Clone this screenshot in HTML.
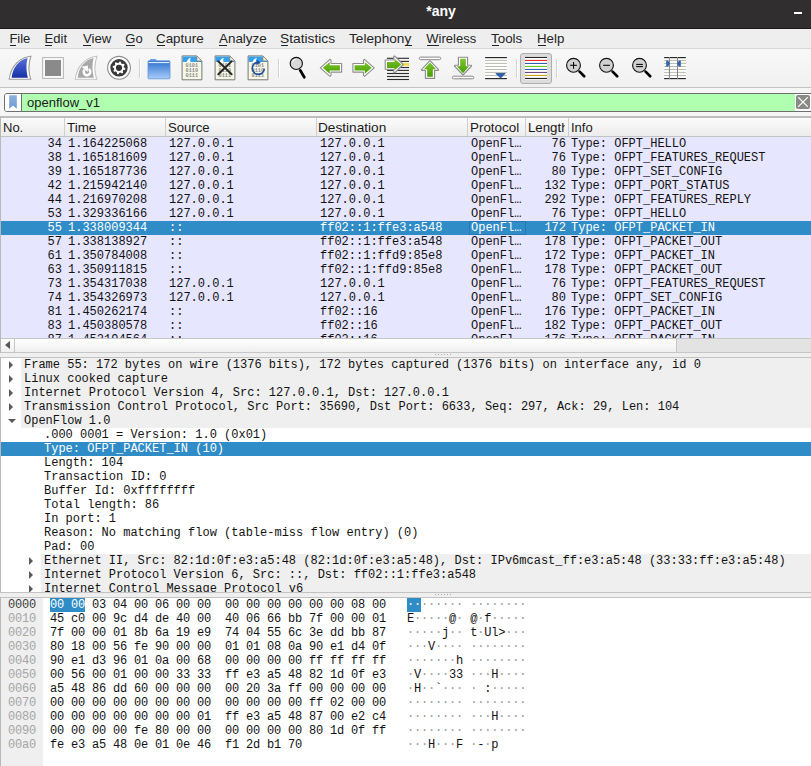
<!DOCTYPE html><html><head><meta charset="utf-8"><style>
*{margin:0;padding:0;box-sizing:border-box}
html,body{width:811px;height:766px;overflow:hidden;background:#efefef;position:relative}
body{font-family:"Liberation Sans",sans-serif;color:#1f1f1f}
.a{position:absolute}
.mono{font-family:"Liberation Mono",monospace;font-size:12px;line-height:14px;white-space:pre}
#title{left:0;top:0;width:811px;height:28px;background:#302e2f}
#titleline{left:0;top:28px;width:811px;height:1px;background:#1a1a1a}
#ttext{left:0;top:3px;width:882px;text-align:center;color:#fff;font-weight:bold;font-size:14px;line-height:16px}
#menubar{left:0;top:29px;width:811px;height:19px;background:#eeeeee}
#menuline{left:0;top:48px;width:811px;height:1px;background:#d8d8d8}
.mi{position:absolute;top:31px;font-size:13px;line-height:15px;color:#232323;white-space:pre}
.ul{position:absolute;top:45px;height:1px;background:#232323}
#toolbar{left:0;top:49px;width:811px;height:38px;background:linear-gradient(#f8f8f8,#f1f1f1)}
#tbline{left:0;top:87px;width:811px;height:1px;background:#c4c4c4}
#fbar{left:0;top:88px;width:811px;height:28px;background:#f6f6f6}
#fedit{left:4px;top:93px;width:820px;height:19px;border:1px solid #6f6f6f;border-radius:3px;background:#b0ffb0;overflow:hidden}
#fbm{left:0;top:0;width:17px;height:17px;background:#fff;border-right:1px solid #6f6f6f}
#ftext{left:22px;top:1px;font-size:13px;line-height:15px;color:#1a1a1a}
#plist{left:0;top:116px;width:811px;height:237px;background:#e7e6ff}
#plborder{left:0;top:116px;width:811px;height:2px;background:#bdbdbd}
#plleft{left:0;top:116px;width:1px;height:237px;background:#b8b8b8}
#phdr{left:1px;top:118px;width:810px;height:18px;background:linear-gradient(#fbfbfb,#ececec)}
#phline{left:1px;top:136px;width:810px;height:1px;background:#c3c3c3}
.hd{position:absolute;top:120px;overflow:hidden;font-size:13px;line-height:15px;color:#1a1a1a;white-space:pre}
.hsep{position:absolute;top:118px;width:1px;height:18px;background:#cfcfcf}
#rows{left:1px;top:137px;width:810px;height:201px;overflow:hidden}
.pr{position:absolute;left:0;width:810px;height:14px;color:#121212}
.pr span{position:absolute;top:0}
.pr.sel{background:#308cc6;color:#fff}
.c0{right:749px;text-align:right}
.c1{left:67px}.c2{left:168px}.c3{left:319px}.c4{left:470px}.c5{right:245px;text-align:right}.c6{left:570px}
#hscroll{left:1px;top:338px;width:810px;height:15px;background:#e3e3e3;border-top:1px solid #c6c6c6;border-bottom:1px solid #c6c6c6}
#hsl{left:13px;top:0;width:663px;height:13px;background:linear-gradient(#ffffff,#efefef);border-left:1px solid #c6c6c6;border-right:1px solid #c6c6c6}
#hbtn{left:0;top:0;width:13px;height:13px;background:linear-gradient(#ffffff,#efefef)}
#det{left:0;top:357px;width:811px;height:236px;background:#fff;border-top:1px solid #c3c3c3;border-bottom:1px solid #c3c3c3;border-left:1px solid #b8b8b8;overflow:hidden}
.dr{position:absolute;height:14px;left:0;width:811px}
.dr .t{position:absolute;top:0}
.gray{background:#efefef}
.dsel{background:#308cc6;color:#fff}
#bytes{left:0;top:597px;width:811px;height:169px;background:#fff;border-top:1px solid #c3c3c3;border-left:1px solid #b8b8b8}
#offcol{left:0;top:0;width:42px;height:169px;background:#efefef}
.off{position:absolute;left:7px;color:#a5a5a5;letter-spacing:-0.2px}
.hx{position:absolute;left:49px;color:#121212;letter-spacing:-0.2px}
.asc i{font-style:normal;color:#9a9a9a}
.asc{position:absolute;left:406px;color:#121212;letter-spacing:-0.2px}
</style></head><body>
<div class="a" id="title"></div><div class="a" id="titleline"></div><div class="a" id="ttext">*any</div>
<div class="a" style="left:794px;top:12px;width:8px;height:2px;background:#fff"></div>
<div class="a" id="menubar"></div><div class="a" id="menuline"></div>
<div class="mi" style="left:9.4px;transform:scaleX(1);transform-origin:0 0">File</div>
<div class="mi" style="left:44.6px;transform:scaleX(1);transform-origin:0 0">Edit</div>
<div class="mi" style="left:83.0px;transform:scaleX(1.01);transform-origin:0 0">View</div>
<div class="mi" style="left:125.3px;transform:scaleX(1);transform-origin:0 0">Go</div>
<div class="mi" style="left:156.0px;transform:scaleX(1.03);transform-origin:0 0">Capture</div>
<div class="mi" style="left:218.5px;transform:scaleX(1.03);transform-origin:0 0">Analyze</div>
<div class="mi" style="left:280.4px;transform:scaleX(1.06);transform-origin:0 0">Statistics</div>
<div class="mi" style="left:349.4px;transform:scaleX(1.05);transform-origin:0 0">Telephony</div>
<div class="mi" style="left:426.3px;transform:scaleX(1);transform-origin:0 0">Wireless</div>
<div class="mi" style="left:491.4px;transform:scaleX(1.03);transform-origin:0 0">Tools</div>
<div class="mi" style="left:537.3px;transform:scaleX(1.02);transform-origin:0 0">Help</div>
<div class="ul" style="left:10px;width:6px"></div>
<div class="ul" style="left:45px;width:7px"></div>
<div class="ul" style="left:83px;width:8px"></div>
<div class="ul" style="left:126px;width:9px"></div>
<div class="ul" style="left:157px;width:8px"></div>
<div class="ul" style="left:219px;width:8px"></div>
<div class="ul" style="left:281px;width:7px"></div>
<div class="ul" style="left:405px;width:7px"></div>
<div class="ul" style="left:427px;width:12px"></div>
<div class="ul" style="left:492px;width:7px"></div>
<div class="ul" style="left:538px;width:8px"></div>
<div class="a" id="toolbar"></div><div class="a" id="tbline"></div>
<svg width="0" height="0" style="position:absolute"><defs>
<linearGradient id="gblue" x1="0" y1="0" x2="0" y2="1"><stop offset="0" stop-color="#5670dc"/><stop offset="1" stop-color="#1730a6"/></linearGradient>
<linearGradient id="ggreen" x1="0" y1="0" x2="0" y2="1"><stop offset="0" stop-color="#7ac52c"/><stop offset="1" stop-color="#4a9e05"/></linearGradient>
<linearGradient id="gfold" x1="0" y1="0" x2="0" y2="1"><stop offset="0" stop-color="#3a78d0"/><stop offset="0.15" stop-color="#3f7fd4"/><stop offset="1" stop-color="#a8ccfa"/></linearGradient>
</defs></svg>
<svg class="a" style="left:6px;top:52px" width="30" height="30" viewBox="0 0 30 30"><path d="M3.2 27.3 L24.8 27.3 C23 22 21.6 14 24.9 4.2 C15 5 5 13 3.2 27.3 Z" fill="#fff" stroke="#9c9c9c" stroke-width="1.1"/><path d="M5.6 25.8 L21.9 25.8 C20.3 20 19.8 12 21.7 6.1 C13 8 7 15 5.6 25.8 Z" fill="url(#gblue)"/></svg>
<svg class="a" style="left:39px;top:52px" width="30" height="30" viewBox="0 0 30 30"><rect x="3.6" y="5.6" width="20.8" height="20.8" fill="#fafafa" stroke="#b5b5b5" stroke-width="1"/><rect x="6" y="8" width="16" height="16" fill="#8a8a8a"/></svg>
<svg class="a" style="left:72px;top:52px" width="30" height="30" viewBox="0 0 30 30"><path d="M3.2 27.3 L24.8 27.3 C23 22 21.6 14 24.9 4.2 C15 5 5 13 3.2 27.3 Z" fill="#fff" stroke="#c4c4c4" stroke-width="1.1"/><path d="M5.6 25.8 L21.9 25.8 C20.3 20 19.8 12 21.7 6.1 C13 8 7 15 5.6 25.8 Z" fill="#a8a8a8"/><path d="M12.67 17.57 A3.3 3.3 0 1 0 16.65 17.04" fill="none" stroke="#fff" stroke-width="2.5"/><polygon points="9.6,14.7 16,13.5 15.8,20" fill="#fff"/></svg>
<svg class="a" style="left:104px;top:52px" width="30" height="30" viewBox="0 0 30 30"><circle cx="15" cy="15.8" r="11.4" fill="#fff" stroke="#8c8c8c" stroke-width="1.1"/><circle cx="15" cy="15.8" r="8.7" fill="#3a3a3a"/><polygon points="15.63,9.43 16.86,9.68 17.31,11.48 18.11,12.01 19.95,11.74 20.64,12.78 19.69,14.38 19.88,15.32 21.37,16.43 21.12,17.66 19.32,18.11 18.79,18.91 19.06,20.75 18.02,21.44 16.42,20.49 15.48,20.68 14.37,22.17 13.14,21.92 12.69,20.12 11.89,19.59 10.05,19.86 9.36,18.82 10.31,17.22 10.12,16.28 8.63,15.17 8.88,13.94 10.68,13.49 11.21,12.69 10.94,10.85 11.98,10.16 13.58,11.11 14.52,10.92" fill="#fff"/><circle cx="15" cy="15.8" r="3.1" fill="#333"/></svg>
<div class="a" style="left:139px;top:59px;width:1px;height:19px;background:#d2d2d2"></div><div class="a" style="left:140px;top:59px;width:1px;height:19px;background:#fff"></div>
<svg class="a" style="left:143px;top:52px" width="30" height="30" viewBox="0 0 30 30"><path d="M6.6 9 L7.4 6.9 L12.9 6.9 L13.9 9 Z" fill="#6c9fe6"/><rect x="5" y="8.8" width="22" height="18" rx="0.9" fill="url(#gfold)" stroke="#5e95e2" stroke-width="0.8"/><rect x="5.6" y="10.1" width="20.8" height="1" fill="#eef3fb"/></svg>
<svg class="a" style="left:177px;top:52px" width="30" height="30" viewBox="0 0 30 30"><path d="M5.1 3.9 L19.8 3.9 L24.9 9 L24.9 27.8 L5.1 27.8 Z" fill="#f7f7e6" stroke="#777" stroke-width="1"/><path d="M5.6 4.4 L19.6 4.4 L24.4 9.2 L24.4 9.9 L5.6 9.9 Z" fill="#37a0ea"/><path d="M9.6 9.9 C10.4 7.6 11.8 6.2 14 5.7 C13 7.2 13 8.6 13.6 9.9 Z" fill="#fff"/><path d="M19.8 4.2 L19.8 9 L24.6 9" fill="#eeeedd" stroke="#777" stroke-width="0.8"/><g fill="#8a8a8a" font-family="Liberation Mono" font-size="5.2" font-weight="bold"><text x="8.6" y="15.2">0101</text><text x="8.6" y="20">0110</text><text x="8.6" y="24.8">0111</text></g></svg>
<svg class="a" style="left:210px;top:52px" width="30" height="30" viewBox="0 0 30 30"><path d="M5.1 3.9 L19.8 3.9 L24.9 9 L24.9 27.8 L5.1 27.8 Z" fill="#f7f7e6" stroke="#777" stroke-width="1"/><path d="M5.6 4.4 L19.6 4.4 L24.4 9.2 L24.4 9.9 L5.6 9.9 Z" fill="#37a0ea"/><path d="M9.6 9.9 C10.4 7.6 11.8 6.2 14 5.7 C13 7.2 13 8.6 13.6 9.9 Z" fill="#fff"/><path d="M19.8 4.2 L19.8 9 L24.6 9" fill="#eeeedd" stroke="#777" stroke-width="0.8"/><g fill="#8a8a8a" font-family="Liberation Mono" font-size="5.2" font-weight="bold"><text x="8.6" y="15.2">0101</text><text x="8.6" y="20">0110</text><text x="8.6" y="24.8">0111</text></g><g stroke="#262626" stroke-width="2" stroke-linecap="round"><line x1="8.3" y1="9.4" x2="21.6" y2="22.3"/><line x1="21.6" y1="9.4" x2="8.3" y2="22.3"/></g></svg>
<svg class="a" style="left:243px;top:52px" width="30" height="30" viewBox="0 0 30 30"><path d="M5.1 3.9 L19.8 3.9 L24.9 9 L24.9 27.8 L5.1 27.8 Z" fill="#f7f7e6" stroke="#777" stroke-width="1"/><path d="M5.6 4.4 L19.6 4.4 L24.4 9.2 L24.4 9.9 L5.6 9.9 Z" fill="#37a0ea"/><path d="M9.6 9.9 C10.4 7.6 11.8 6.2 14 5.7 C13 7.2 13 8.6 13.6 9.9 Z" fill="#fff"/><path d="M19.8 4.2 L19.8 9 L24.6 9" fill="#eeeedd" stroke="#777" stroke-width="0.8"/><g fill="#8a8a8a" font-family="Liberation Mono" font-size="5.2" font-weight="bold"><text x="8.6" y="15.2">0101</text><text x="8.6" y="20">0110</text><text x="8.6" y="24.8">0111</text></g><path d="M21.3 16.6 A6 6 0 1 1 14.2 10.4" fill="none" stroke="#1e4f9c" stroke-width="1.7"/><polygon points="13.6,7.6 17.6,10.4 13.6,13" fill="#1e4f9c"/></svg>
<div class="a" style="left:278px;top:59px;width:1px;height:19px;background:#d2d2d2"></div><div class="a" style="left:279px;top:59px;width:1px;height:19px;background:#fff"></div>
<svg class="a" style="left:282px;top:52px" width="30" height="30" viewBox="0 0 30 30"><line x1="18.2" y1="18.3" x2="22.3" y2="25.3" stroke="#000" stroke-width="2.7" stroke-linecap="round"/><circle cx="14.3" cy="11.4" r="6.1" fill="#d8d8d8" stroke="#111" stroke-width="1.15"/><path d="M10.6 9.8 A4 4 0 0 1 13.8 7.3" fill="none" stroke="#fff" stroke-width="0.9"/></svg>
<svg class="a" style="left:315px;top:52px" width="30" height="30" viewBox="0 0 30 30"><polygon points="5.30,15.80 15.00,7.30 16.00,8.20 16.00,11.50 26.60,11.50 26.60,20.10 16.00,20.10 16.00,23.40 15.00,24.30" fill="#fff" stroke="#8c8c8c" stroke-width="1.1" stroke-linejoin="round"/><polygon points="7.80,15.80 14.70,9.90 14.70,13.20 24.90,13.20 24.90,18.60 14.70,18.60 14.70,21.70" fill="url(#ggreen)"/></svg>
<svg class="a" style="left:348px;top:52px" width="30" height="30" viewBox="0 0 30 30"><polygon points="26.20,15.80 16.50,7.30 15.50,8.20 15.50,11.50 4.90,11.50 4.90,20.10 15.50,20.10 15.50,23.40 16.50,24.30" fill="#fff" stroke="#8c8c8c" stroke-width="1.1" stroke-linejoin="round"/><polygon points="23.70,15.80 16.80,9.90 16.80,13.20 6.60,13.20 6.60,18.60 16.80,18.60 16.80,21.70" fill="url(#ggreen)"/></svg>
<svg class="a" style="left:381px;top:52px" width="30" height="30" viewBox="0 0 30 30"><rect x="6" y="5.75" width="22" height="1.1" fill="#2b2b2b"/><rect x="6" y="8.85" width="22" height="1.1" fill="#2b2b2b"/><rect x="6" y="14.95" width="22" height="1.1" fill="#2b2b2b"/><rect x="6" y="17.85" width="22" height="1.1" fill="#2b2b2b"/><rect x="6" y="20.95" width="22" height="1.1" fill="#2b2b2b"/><rect x="6" y="23.95" width="22" height="1.1" fill="#2b2b2b"/><rect x="6" y="26.95" width="22" height="1.1" fill="#2b2b2b"/><rect x="6" y="11.9" width="22" height="1.1" fill="#2b2b2b"/><rect x="21.4" y="11.2" width="6.6" height="2.6" fill="#f6df3c"/><polygon points="4.2,8.0 12.8,8.0 12.8,4.3 13.6,3.9 22.2,12.5 13.6,21 12.8,20.6 12.8,17.3 4.2,17.3" fill="#fff" stroke="#8c8c8c" stroke-width="1.1" stroke-linejoin="round"/><polygon points="6.0,10.0 13.5,10.0 13.5,6.8 20.3,12.5 13.5,18.3 13.5,15.9 6.0,15.9" fill="url(#ggreen)"/></svg>
<svg class="a" style="left:414px;top:52px" width="30" height="30" viewBox="0 0 30 30"><rect x="5.3" y="5.1" width="21.4" height="2.6" rx="1.3" fill="#fff" stroke="#888" stroke-width="1"/><polygon points="16,8.6 24.6,17.6 24.2,18.4 20.6,18.4 20.6,26.4 11.4,26.4 11.4,18.4 7.8,18.4 7.4,17.6" fill="#fff" stroke="#8c8c8c" stroke-width="1.1" stroke-linejoin="round"/><polygon points="16,10.4 22.1,17.3 18.8,17.3 18.8,24.8 13.2,24.8 13.2,17.3 9.9,17.3" fill="url(#ggreen)"/></svg>
<svg class="a" style="left:447px;top:52px" width="30" height="30" viewBox="0 0 30 30"><rect x="5.3" y="24.2" width="21.4" height="2.6" rx="1.3" fill="#fff" stroke="#888" stroke-width="1"/><polygon points="16.00,23.00 24.60,14.00 24.20,13.20 20.60,13.20 20.60,5.20 11.40,5.20 11.40,13.20 7.80,13.20 7.40,14.00" fill="#fff" stroke="#8c8c8c" stroke-width="1.1" stroke-linejoin="round"/><polygon points="16.00,21.20 22.10,14.30 18.80,14.30 18.80,6.80 13.20,6.80 13.20,14.30 9.90,14.30" fill="url(#ggreen)"/></svg>
<svg class="a" style="left:480px;top:52px" width="30" height="30" viewBox="0 0 30 30"><rect x="4.8" y="4.6" width="22.4" height="23" fill="#fff"/><rect x="5.1" y="5" width="21.8" height="1.2" fill="#2a2a2a"/><rect x="5.1" y="26" width="21.8" height="1.2" fill="#2a2a2a"/><rect x="5.1" y="7.90" width="21.8" height="1" fill="#b9baae"/><rect x="5.1" y="10.90" width="21.8" height="1" fill="#b9baae"/><rect x="5.1" y="14.00" width="21.8" height="1" fill="#b9baae"/><rect x="5.1" y="17.00" width="21.8" height="1" fill="#b9baae"/><rect x="5.1" y="19.90" width="21.8" height="1" fill="#b9baae"/><rect x="5.1" y="23.00" width="21.8" height="1" fill="#b9baae"/><path d="M15.4 21.6 Q15.2 21 16 21 L25 21 Q25.8 21 25.6 21.6 L20.6 26.6 Z" fill="#2f63ad"/></svg>
<div class="a" style="left:516px;top:59px;width:1px;height:19px;background:#d2d2d2"></div><div class="a" style="left:517px;top:59px;width:1px;height:19px;background:#fff"></div>
<div class="a" style="left:556px;top:59px;width:1px;height:19px;background:#d2d2d2"></div><div class="a" style="left:557px;top:59px;width:1px;height:19px;background:#fff"></div>
<div class="a" style="left:520px;top:53px;width:32px;height:31px;border:1px solid #aeaeae;border-radius:3px;background:#dcdcdc"></div>
<svg class="a" style="left:524px;top:55px" width="24" height="26" viewBox="0 0 24 26"><rect x="1" y="1.6" width="22" height="23" fill="#fff"/><rect x="1" y="1.9" width="22" height="1.1" fill="#262626"/><rect x="1" y="4.9" width="22" height="1.1" fill="#e52b2b"/><rect x="1" y="7.9" width="22" height="1.1" fill="#2f63ad"/><rect x="1" y="10.9" width="22" height="1.1" fill="#5ac51c"/><rect x="1" y="13.9" width="22" height="1.1" fill="#2f63ad"/><rect x="1" y="16.9" width="22" height="1.1" fill="#6b4a86"/><rect x="1" y="19.9" width="22" height="1.1" fill="#c9a117"/><rect x="1" y="22.9" width="22" height="1.1" fill="#262626"/></svg>
<svg class="a" style="left:560px;top:52px" width="30" height="30" viewBox="0 0 30 30"><line x1="19.6" y1="19.6" x2="24.2" y2="24.3" stroke="#000" stroke-width="2.7" stroke-linecap="round"/><circle cx="13.5" cy="13.3" r="6.9" fill="#d0d0d0" stroke="#111" stroke-width="1.15"/><g stroke="#000" stroke-width="1.05"><line x1="10.2" y1="13.3" x2="16.9" y2="13.3"/><line x1="13.55" y1="10" x2="13.55" y2="16.7"/></g></svg>
<svg class="a" style="left:593px;top:52px" width="30" height="30" viewBox="0 0 30 30"><line x1="19.6" y1="19.6" x2="24.2" y2="24.3" stroke="#000" stroke-width="2.7" stroke-linecap="round"/><circle cx="13.5" cy="13.3" r="6.9" fill="#d0d0d0" stroke="#111" stroke-width="1.15"/><g stroke="#000" stroke-width="1.05"><line x1="10.2" y1="13.3" x2="16.9" y2="13.3"/></g></svg>
<svg class="a" style="left:626px;top:52px" width="30" height="30" viewBox="0 0 30 30"><line x1="19.6" y1="19.6" x2="24.2" y2="24.3" stroke="#000" stroke-width="2.7" stroke-linecap="round"/><circle cx="13.5" cy="13.3" r="6.9" fill="#d0d0d0" stroke="#111" stroke-width="1.15"/><g stroke="#000" stroke-width="1.05"><line x1="10.2" y1="12.4" x2="16.9" y2="12.4"/><line x1="10.2" y1="14.6" x2="16.9" y2="14.6"/></g></svg>
<svg class="a" style="left:659px;top:52px" width="30" height="30" viewBox="0 0 30 30"><rect x="4.8" y="4.6" width="22.4" height="23" fill="#fff"/><rect x="5.1" y="5" width="21.8" height="1.2" fill="#2a2a2a"/><rect x="5.1" y="26" width="21.8" height="1.2" fill="#2a2a2a"/><rect x="5.1" y="7.90" width="21.8" height="1" fill="#b9baae"/><rect x="5.1" y="10.90" width="21.8" height="1" fill="#b9baae"/><rect x="5.1" y="14.00" width="21.8" height="1" fill="#b9baae"/><rect x="5.1" y="17.00" width="21.8" height="1" fill="#b9baae"/><rect x="5.1" y="19.90" width="21.8" height="1" fill="#b9baae"/><rect x="5.1" y="23.00" width="21.8" height="1" fill="#b9baae"/><rect x="9.9" y="5" width="1" height="22" fill="#858585"/><rect x="18" y="5" width="1" height="22" fill="#858585"/><path d="M7.2 8.6 L9 8.4 L11 11.6 L9 14.8 L7.2 14.6 Z" fill="#2f63ad"/><path d="M21.8 8.6 L20 8.4 L18 11.6 L20 14.8 L21.8 14.6 Z" fill="#2f63ad"/></svg>
<div class="a" id="fbar"></div>
<div class="a" id="fedit"><div class="a" id="fbm"></div><div class="a" id="ftext">openflow_v1</div></div>
<svg class="a" style="left:8px;top:94px" width="10" height="16" viewBox="0 0 10 16"><defs><linearGradient id="gbm" x1="0" y1="0" x2="0" y2="1"><stop offset="0" stop-color="#8db0dc"/><stop offset="1" stop-color="#6a9ad6"/></linearGradient></defs><path d="M1.2 1.2 L8.8 1.2 L8.8 14.8 L5 11.6 L1.2 14.8 Z" fill="url(#gbm)"/></svg>
<div class="a" style="left:795px;top:94px;width:16px;height:17px;background:#fff"></div>
<svg class="a" style="left:796px;top:95px" width="14" height="14" viewBox="0 0 14 14"><rect x="0" y="0" width="14" height="14" rx="2" fill="#898985"/><g stroke="#fff" stroke-width="1.3" stroke-linecap="round"><line x1="2.6" y1="2.6" x2="11.4" y2="11.4"/><line x1="11.4" y1="2.6" x2="2.6" y2="11.4"/></g></svg>
<div class="a" id="plist"></div><div class="a" id="plborder"></div><div class="a" id="plleft"></div>
<div class="a" id="phdr"></div><div class="a" id="phline"></div>
<div class="hsep" style="left:64px"></div>
<div class="hsep" style="left:165px"></div>
<div class="hsep" style="left:316px"></div>
<div class="hsep" style="left:467px"></div>
<div class="hsep" style="left:525px"></div>
<div class="hsep" style="left:568px"></div>
<div class="hd" style="left:3px;width:60.0px;transform:scaleX(1);transform-origin:0 0">No.</div>
<div class="hd" style="left:67px;width:94.2px;transform:scaleX(1.03);transform-origin:0 0">Time</div>
<div class="hd" style="left:168px;width:145.5px;transform:scaleX(1.01);transform-origin:0 0">Source</div>
<div class="hd" style="left:318px;width:140.0px;transform:scaleX(1.05);transform-origin:0 0">Destination</div>
<div class="hd" style="left:470px;width:52.4px;transform:scaleX(1.03);transform-origin:0 0">Protocol</div>
<div class="hd" style="left:528px;width:36.3px;transform:scaleX(1.02);transform-origin:0 0">Length</div>
<div class="hd" style="left:571px;width:240.0px;transform:scaleX(1);transform-origin:0 0">Info</div>
<div class="a" id="rows">
<div class="pr mono" style="top:0px"><span class="c0">34</span><span class="c1">1.164225068</span><span class="c2">127.0.0.1</span><span class="c3">127.0.0.1</span><span class="c4">OpenFl…</span><span class="c5">76</span><span class="c6">Type: OFPT_HELLO</span></div>
<div class="pr mono" style="top:14px"><span class="c0">38</span><span class="c1">1.165181609</span><span class="c2">127.0.0.1</span><span class="c3">127.0.0.1</span><span class="c4">OpenFl…</span><span class="c5">76</span><span class="c6">Type: OFPT_FEATURES_REQUEST</span></div>
<div class="pr mono" style="top:28px"><span class="c0">39</span><span class="c1">1.165187736</span><span class="c2">127.0.0.1</span><span class="c3">127.0.0.1</span><span class="c4">OpenFl…</span><span class="c5">80</span><span class="c6">Type: OFPT_SET_CONFIG</span></div>
<div class="pr mono" style="top:42px"><span class="c0">42</span><span class="c1">1.215942140</span><span class="c2">127.0.0.1</span><span class="c3">127.0.0.1</span><span class="c4">OpenFl…</span><span class="c5">132</span><span class="c6">Type: OFPT_PORT_STATUS</span></div>
<div class="pr mono" style="top:56px"><span class="c0">44</span><span class="c1">1.216970208</span><span class="c2">127.0.0.1</span><span class="c3">127.0.0.1</span><span class="c4">OpenFl…</span><span class="c5">292</span><span class="c6">Type: OFPT_FEATURES_REPLY</span></div>
<div class="pr mono" style="top:70px"><span class="c0">53</span><span class="c1">1.329336166</span><span class="c2">127.0.0.1</span><span class="c3">127.0.0.1</span><span class="c4">OpenFl…</span><span class="c5">76</span><span class="c6">Type: OFPT_HELLO</span></div>
<div class="pr mono sel" style="top:84px"><span class="c0">55</span><span class="c1">1.338009344</span><span class="c2">::</span><span class="c3">ff02::1:ffe3:a548</span><span class="c4">OpenFl…</span><span class="c5">172</span><span class="c6">Type: OFPT_PACKET_IN</span></div>
<div class="pr mono" style="top:98px"><span class="c0">57</span><span class="c1">1.338138927</span><span class="c2">::</span><span class="c3">ff02::1:ffe3:a548</span><span class="c4">OpenFl…</span><span class="c5">178</span><span class="c6">Type: OFPT_PACKET_OUT</span></div>
<div class="pr mono" style="top:112px"><span class="c0">61</span><span class="c1">1.350784008</span><span class="c2">::</span><span class="c3">ff02::1:ffd9:85e8</span><span class="c4">OpenFl…</span><span class="c5">172</span><span class="c6">Type: OFPT_PACKET_IN</span></div>
<div class="pr mono" style="top:126px"><span class="c0">63</span><span class="c1">1.350911815</span><span class="c2">::</span><span class="c3">ff02::1:ffd9:85e8</span><span class="c4">OpenFl…</span><span class="c5">178</span><span class="c6">Type: OFPT_PACKET_OUT</span></div>
<div class="pr mono" style="top:140px"><span class="c0">73</span><span class="c1">1.354317038</span><span class="c2">127.0.0.1</span><span class="c3">127.0.0.1</span><span class="c4">OpenFl…</span><span class="c5">76</span><span class="c6">Type: OFPT_FEATURES_REQUEST</span></div>
<div class="pr mono" style="top:154px"><span class="c0">74</span><span class="c1">1.354326973</span><span class="c2">127.0.0.1</span><span class="c3">127.0.0.1</span><span class="c4">OpenFl…</span><span class="c5">80</span><span class="c6">Type: OFPT_SET_CONFIG</span></div>
<div class="pr mono" style="top:168px"><span class="c0">81</span><span class="c1">1.450262174</span><span class="c2">::</span><span class="c3">ff02::16</span><span class="c4">OpenFl…</span><span class="c5">176</span><span class="c6">Type: OFPT_PACKET_IN</span></div>
<div class="pr mono" style="top:182px"><span class="c0">83</span><span class="c1">1.450380578</span><span class="c2">::</span><span class="c3">ff02::16</span><span class="c4">OpenFl…</span><span class="c5">182</span><span class="c6">Type: OFPT_PACKET_OUT</span></div>
<div class="pr mono" style="top:196px"><span class="c0">87</span><span class="c1">1.452194564</span><span class="c2">::</span><span class="c3">ff02::16</span><span class="c4">OpenFl…</span><span class="c5">176</span><span class="c6">Type: OFPT_PACKET_IN</span></div>
<div class="a" style="left:468px;top:84px;width:57px;height:14px;border:1px solid #2677b3"></div>
</div>
<div class="a" id="hscroll"><div class="a" id="hsl"></div><div class="a" id="hbtn"></div><div class="a" style="left:4px;top:2px;width:0;height:0;border-top:4px solid transparent;border-bottom:4px solid transparent;border-right:5px solid #555"></div></div>
<div class="a" style="left:435px;top:354px;width:1px;height:1px;background:#a8a8a8"></div>
<div class="a" style="left:435px;top:594px;width:1px;height:1px;background:#a8a8a8"></div>
<div class="a" style="left:438px;top:354px;width:1px;height:1px;background:#a8a8a8"></div>
<div class="a" style="left:438px;top:594px;width:1px;height:1px;background:#a8a8a8"></div>
<div class="a" style="left:441px;top:354px;width:1px;height:1px;background:#a8a8a8"></div>
<div class="a" style="left:441px;top:594px;width:1px;height:1px;background:#a8a8a8"></div>
<div class="a" style="left:444px;top:354px;width:1px;height:1px;background:#a8a8a8"></div>
<div class="a" style="left:444px;top:594px;width:1px;height:1px;background:#a8a8a8"></div>
<div class="a" style="left:447px;top:354px;width:1px;height:1px;background:#a8a8a8"></div>
<div class="a" style="left:447px;top:594px;width:1px;height:1px;background:#a8a8a8"></div>
<div class="a" style="left:450px;top:354px;width:1px;height:1px;background:#a8a8a8"></div>
<div class="a" style="left:450px;top:594px;width:1px;height:1px;background:#a8a8a8"></div>
<div class="a" id="det">
<div class="a gray" style="left:20px;top:0px;width:791px;height:14px"></div>
<div class="a mono" style="left:23px;top:0px;color:#121212">Frame 55: 172 bytes on wire (1376 bits), 172 bytes captured (1376 bits) on interface any, id 0</div>
<div class="a" style="left:8px;top:3px;width:0;height:0;border-top:4px solid transparent;border-bottom:4px solid transparent;border-left:4px solid #5a5a5a"></div>
<div class="a gray" style="left:20px;top:14px;width:791px;height:14px"></div>
<div class="a mono" style="left:23px;top:14px;color:#121212">Linux cooked capture</div>
<div class="a" style="left:8px;top:17px;width:0;height:0;border-top:4px solid transparent;border-bottom:4px solid transparent;border-left:4px solid #5a5a5a"></div>
<div class="a gray" style="left:20px;top:28px;width:791px;height:14px"></div>
<div class="a mono" style="left:23px;top:28px;color:#121212">Internet Protocol Version 4, Src: 127.0.0.1, Dst: 127.0.0.1</div>
<div class="a" style="left:8px;top:31px;width:0;height:0;border-top:4px solid transparent;border-bottom:4px solid transparent;border-left:4px solid #5a5a5a"></div>
<div class="a gray" style="left:20px;top:42px;width:791px;height:14px"></div>
<div class="a mono" style="left:23px;top:42px;color:#121212">Transmission Control Protocol, Src Port: 35690, Dst Port: 6633, Seq: 297, Ack: 29, Len: 104</div>
<div class="a" style="left:8px;top:45px;width:0;height:0;border-top:4px solid transparent;border-bottom:4px solid transparent;border-left:4px solid #5a5a5a"></div>
<div class="a gray" style="left:20px;top:56px;width:791px;height:14px"></div>
<div class="a mono" style="left:23px;top:56px;color:#121212">OpenFlow 1.0</div>
<div class="a" style="left:7px;top:61px;width:0;height:0;border-left:4px solid transparent;border-right:4px solid transparent;border-top:4px solid #5a5a5a"></div>
<div class="a mono" style="left:43px;top:70px;color:#121212">.000 0001 = Version: 1.0 (0x01)</div>
<div class="a dsel" style="left:0;top:84px;width:811px;height:14px"></div>
<div class="a mono" style="left:43px;top:84px;color:#fff">Type: OFPT_PACKET_IN (10)</div>
<div class="a mono" style="left:43px;top:98px;color:#121212">Length: 104</div>
<div class="a mono" style="left:43px;top:112px;color:#121212">Transaction ID: 0</div>
<div class="a mono" style="left:43px;top:126px;color:#121212">Buffer Id: 0xffffffff</div>
<div class="a mono" style="left:43px;top:140px;color:#121212">Total length: 86</div>
<div class="a mono" style="left:43px;top:154px;color:#121212">In port: 1</div>
<div class="a mono" style="left:43px;top:168px;color:#121212">Reason: No matching flow (table-miss flow entry) (0)</div>
<div class="a mono" style="left:43px;top:182px;color:#121212">Pad: 00</div>
<div class="a gray" style="left:40px;top:196px;width:771px;height:14px"></div>
<div class="a mono" style="left:43px;top:196px;color:#121212">Ethernet II, Src: 82:1d:0f:e3:a5:48 (82:1d:0f:e3:a5:48), Dst: IPv6mcast_ff:e3:a5:48 (33:33:ff:e3:a5:48)</div>
<div class="a" style="left:28px;top:199px;width:0;height:0;border-top:4px solid transparent;border-bottom:4px solid transparent;border-left:4px solid #5a5a5a"></div>
<div class="a gray" style="left:40px;top:210px;width:771px;height:14px"></div>
<div class="a mono" style="left:43px;top:210px;color:#121212">Internet Protocol Version 6, Src: ::, Dst: ff02::1:ffe3:a548</div>
<div class="a" style="left:28px;top:213px;width:0;height:0;border-top:4px solid transparent;border-bottom:4px solid transparent;border-left:4px solid #5a5a5a"></div>
<div class="a gray" style="left:40px;top:224px;width:771px;height:14px"></div>
<div class="a mono" style="left:43px;top:224px;color:#121212">Internet Control Message Protocol v6</div>
<div class="a" style="left:28px;top:227px;width:0;height:0;border-top:4px solid transparent;border-bottom:4px solid transparent;border-left:4px solid #5a5a5a"></div>
</div>
<div class="a" id="bytes"><div class="a" id="offcol"></div>
<div class="off mono" style="top:0px;color:#3c3c3c">0000</div>
<div class="a" style="left:49px;top:0px;width:35px;height:14px;background:#308cc6"></div>
<div class="a" style="left:406px;top:0px;width:14px;height:14px;background:#308cc6"></div>
<div class="hx mono" style="top:0px"><span style="color:#fff">00 00</span> 03 04 00 06 00 00  00 00 00 00 00 00 08 00</div>
<div class="asc mono" style="top:0px"><span style="color:#fff">··</span><i>·</i><i>·</i><i>·</i><i>·</i><i>·</i><i>·</i> <i>·</i><i>·</i><i>·</i><i>·</i><i>·</i><i>·</i><i>·</i><i>·</i></div>
<div class="off mono" style="top:14px;color:#a5a5a5">0010</div>
<div class="hx mono" style="top:14px">45 c0 00 9c d4 de 40 00  40 06 66 bb 7f 00 00 01</div>
<div class="asc mono" style="top:14px">E<i>·</i><i>·</i><i>·</i><i>·</i><i>·</i>@<i>·</i> @<i>·</i>f<i>·</i><i>·</i><i>·</i><i>·</i><i>·</i></div>
<div class="off mono" style="top:28px;color:#a5a5a5">0020</div>
<div class="hx mono" style="top:28px">7f 00 00 01 8b 6a 19 e9  74 04 55 6c 3e dd bb 87</div>
<div class="asc mono" style="top:28px"><i>·</i><i>·</i><i>·</i><i>·</i><i>·</i>j<i>·</i><i>·</i> t<i>·</i>Ul&gt;<i>·</i><i>·</i><i>·</i></div>
<div class="off mono" style="top:42px;color:#a5a5a5">0030</div>
<div class="hx mono" style="top:42px">80 18 00 56 fe 90 00 00  01 01 08 0a 90 e1 d4 0f</div>
<div class="asc mono" style="top:42px"><i>·</i><i>·</i><i>·</i>V<i>·</i><i>·</i><i>·</i><i>·</i> <i>·</i><i>·</i><i>·</i><i>·</i><i>·</i><i>·</i><i>·</i><i>·</i></div>
<div class="off mono" style="top:56px;color:#a5a5a5">0040</div>
<div class="hx mono" style="top:56px">90 e1 d3 96 01 0a 00 68  00 00 00 00 ff ff ff ff</div>
<div class="asc mono" style="top:56px"><i>·</i><i>·</i><i>·</i><i>·</i><i>·</i><i>·</i><i>·</i>h <i>·</i><i>·</i><i>·</i><i>·</i><i>·</i><i>·</i><i>·</i><i>·</i></div>
<div class="off mono" style="top:70px;color:#a5a5a5">0050</div>
<div class="hx mono" style="top:70px">00 56 00 01 00 00 33 33  ff e3 a5 48 82 1d 0f e3</div>
<div class="asc mono" style="top:70px"><i>·</i>V<i>·</i><i>·</i><i>·</i><i>·</i>33 <i>·</i><i>·</i><i>·</i>H<i>·</i><i>·</i><i>·</i><i>·</i></div>
<div class="off mono" style="top:84px;color:#a5a5a5">0060</div>
<div class="hx mono" style="top:84px">a5 48 86 dd 60 00 00 00  00 20 3a ff 00 00 00 00</div>
<div class="asc mono" style="top:84px"><i>·</i>H<i>·</i><i>·</i>`<i>·</i><i>·</i><i>·</i> <i>·</i> :<i>·</i><i>·</i><i>·</i><i>·</i><i>·</i></div>
<div class="off mono" style="top:98px;color:#a5a5a5">0070</div>
<div class="hx mono" style="top:98px">00 00 00 00 00 00 00 00  00 00 00 00 ff 02 00 00</div>
<div class="asc mono" style="top:98px"><i>·</i><i>·</i><i>·</i><i>·</i><i>·</i><i>·</i><i>·</i><i>·</i> <i>·</i><i>·</i><i>·</i><i>·</i><i>·</i><i>·</i><i>·</i><i>·</i></div>
<div class="off mono" style="top:112px;color:#a5a5a5">0080</div>
<div class="hx mono" style="top:112px">00 00 00 00 00 00 00 01  ff e3 a5 48 87 00 e2 c4</div>
<div class="asc mono" style="top:112px"><i>·</i><i>·</i><i>·</i><i>·</i><i>·</i><i>·</i><i>·</i><i>·</i> <i>·</i><i>·</i><i>·</i>H<i>·</i><i>·</i><i>·</i><i>·</i></div>
<div class="off mono" style="top:126px;color:#a5a5a5">0090</div>
<div class="hx mono" style="top:126px">00 00 00 00 fe 80 00 00  00 00 00 00 80 1d 0f ff</div>
<div class="asc mono" style="top:126px"><i>·</i><i>·</i><i>·</i><i>·</i><i>·</i><i>·</i><i>·</i><i>·</i> <i>·</i><i>·</i><i>·</i><i>·</i><i>·</i><i>·</i><i>·</i><i>·</i></div>
<div class="off mono" style="top:140px;color:#a5a5a5">00a0</div>
<div class="hx mono" style="top:140px">fe e3 a5 48 0e 01 0e 46  f1 2d b1 70</div>
<div class="asc mono" style="top:140px"><i>·</i><i>·</i><i>·</i>H<i>·</i><i>·</i><i>·</i>F <i>·</i>-<i>·</i>p</div>
</div>
</body></html>
